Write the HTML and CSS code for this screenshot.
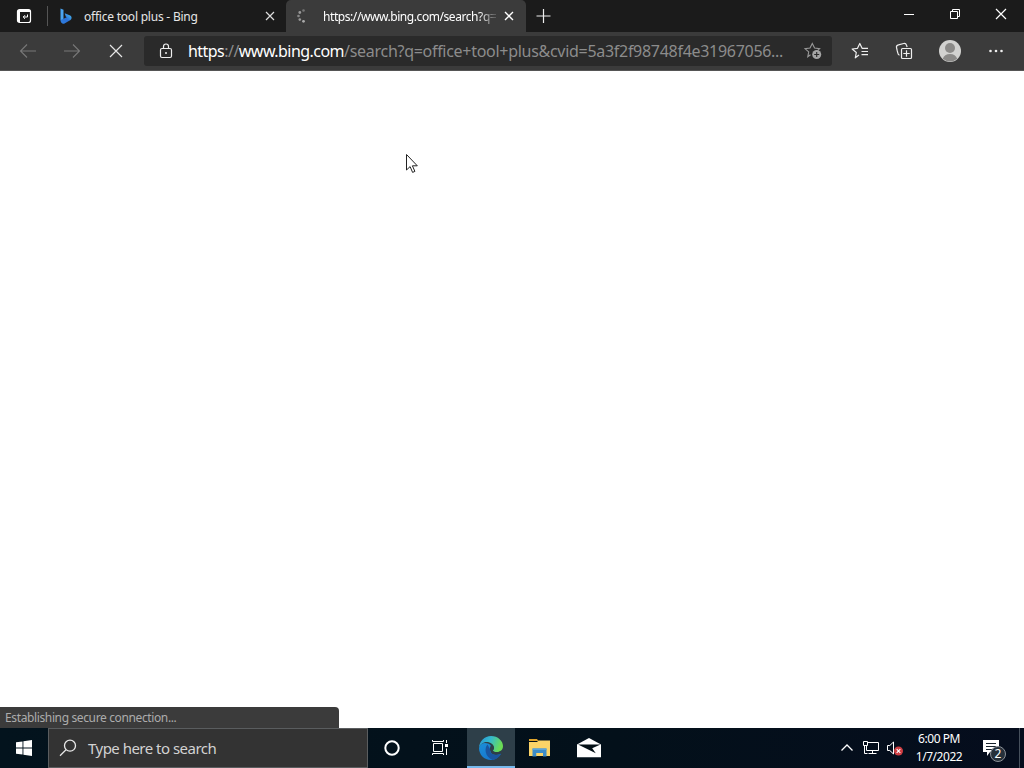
FILE: index.html
```html
<!DOCTYPE html>
<html lang="en">
<head>
    <meta charset="UTF-8">
    <title>office tool plus - Bing</title>
    <link rel="stylesheet" href="styles.css">
</head>
<body>
    <div class="desktop">
        <div class="tab-strip">
            <div class="tab-actions">
                <svg width="16" height="16" viewBox="0 0 16 16" fill="none" stroke="#fff">
                    <rect x="1.500" y="1.500" width="13" height="13" rx="2" stroke-width="1.200"/>
                    <path d="M2 2h12v2H4v10H2z" fill="#fff" stroke="none"/>
                    <path d="M11.500 6.500v2.500H7.500M9 7.200L7.200 9 9 10.800" stroke-width="1"/>
                </svg>
            </div>
            <div class="tab">
                <svg class="favicon" width="16" height="16" viewBox="0 0 16 16">
                    <defs>
                        <linearGradient id="bing" x1="0" y1="1" x2="1" y2="0">
                            <stop offset="0" stop-color="#2f7fe0"/>
                            <stop offset=".5" stop-color="#2b71d8"/>
                            <stop offset="1" stop-color="#4cc4f0"/>
                        </linearGradient>
                    </defs>
                    <path d="M2.500 .5l3 1.200v9.200l-1 2.600-2-1.500z" fill="#4ba4f0"/>
                    <path d="M2.500 12l3-1.200 3.200-1.600-1-.6L6.700 5.200l5.500 2.200c1.800 1 1.800 3.400.3 4.600l-6 3.600c-1.900.8-4-.8-4-3.600z" fill="url(#bing)"/>
                </svg>
                <span class="tab-title">office tool plus - Bing</span>
                <svg class="tab-close" width="10" height="10" viewBox="0 0 10 10" stroke="#ddd" stroke-width="1.200"><path d="M1 1l8 8M9 1L1 9"/></svg>
            </div>
            <div class="tab active">
                <svg class="favicon" width="16" height="16" viewBox="0 0 16 16" fill="#999">
                    <circle cx="7.500" cy="2.500" r="1.300" fill="#777"/>
                    <circle cx="3.800" cy="4.500" r="1.400"/>
                    <circle cx="2.500" cy="8" r="1.300" fill="#888"/>
                    <circle cx="3.800" cy="11.600" r="1.300"/>
                    <circle cx="7.500" cy="13.300" r="1.400" fill="#aaa"/>
                </svg>
                <span class="tab-title fade">https://www.bing.com/search?q=</span>
                <svg class="tab-close" width="10" height="10" viewBox="0 0 10 10" stroke="#fff" stroke-width="1.400"><path d="M1 1l8 8M9 1L1 9"/></svg>
            </div>
            <svg class="new-tab" width="16" height="16" viewBox="0 0 16 16" stroke="#eee" stroke-width="1.200"><path d="M7.500 1v14M.5 8h14"/></svg>
            <div class="window-buttons">
                <svg width="46" height="32" viewBox="0 0 46 32" stroke="#fff"><path d="M18 14.500h10"/></svg>
                <svg width="46" height="32" viewBox="0 0 46 32" fill="none" stroke="#fff"><path d="M18.500 11.500h7v7h-7zM20.500 11.500v-2h7v7h-2"/></svg>
                <svg width="46" height="32" viewBox="0 0 46 32" stroke="#fff" stroke-width="1.200"><path d="M18 9l10 10M28 9L18 19"/></svg>
            </div>
        </div>

        <div class="toolbar">
            <div class="nav-buttons">
                <svg width="18" height="18" viewBox="0 0 18 18" fill="none" stroke="#787878" stroke-width="1.100"><path d="M17 9H1.500M8 2.500L1.500 9 8 15.500"/></svg>
                <svg width="18" height="18" viewBox="0 0 18 18" fill="none" stroke="#787878" stroke-width="1.100"><path d="M1 9h15.500M10 2.500L16.500 9 10 15.500"/></svg>
                <svg width="18" height="18" viewBox="0 0 18 18" fill="none" stroke="#e6e6e6" stroke-width="1.200"><path d="M3 3l12 12M15 3L3 15"/></svg>
            </div>
            <div class="address-bar">
                <svg class="lock" width="14" height="16" viewBox="0 0 14 16" fill="none" stroke="#eee" stroke-width="1.200">
                    <rect x="1.500" y="5.500" width="11" height="9" rx="1.500"/>
                    <path d="M4.500 5.500V3.500a2.500 2.500 0 0 1 5 0v2"/>
                    <circle cx="7" cy="10" r="1" fill="#eee" stroke="none"/>
                </svg>
                <div class="url"><span class="host">https</span>://<span class="host">www.bing.com</span><span class="path">/search?q=office+tool+plus&amp;cvid=5a3f2f98748f4e31967056...</span></div>
                <svg class="star-add" width="18" height="18" viewBox="0 0 18 18" fill="none" stroke="#999" stroke-width="1.100">
                    <path d="M6.500 12.700L3.800 14.800l.9-4.900L1 6.700l5-.6L8.300 1.500l2.300 4.600 5 .6-2.100 1.900"/>
                    <circle cx="12.700" cy="12.500" r="4.500" fill="#a5a5a5" stroke="none"/>
                    <path d="M12.700 10v5M10.200 12.500h5" stroke="#2b2b2b"/>
                </svg>
            </div>
            <div class="toolbar-icons">
                <svg width="18" height="18" viewBox="0 0 18 18" fill="none" stroke="#eee" stroke-width="1.200">
                    <path d="M8 13L4.300 15.800l1-5.300L1.200 7l5.300-.7L8.800 1.500l2.300 4.800H17M10.500 9.500H17M10.500 12.700H17" stroke-linejoin="round"/>
                </svg>
                <svg width="18" height="18" viewBox="0 0 18 18" fill="none" stroke="#eee" stroke-width="1.200">
                    <path d="M4.500 13.200C2.500 12.500 3 11 2.300 9L1.500 5.500C1.200 4 2 3.200 3.400 2.900L8.700 1.500c1.400-.3 2.300.2 2.800 1.800l.6 1.700"/>
                    <rect x="6.500" y="6.500" width="10" height="10" rx="1"/>
                    <path d="M11.500 8.300v6.400M8.300 11.500h6.400"/>
                </svg>
                <svg width="22" height="22" viewBox="0 0 22 22">
                    <circle cx="11" cy="11" r="11" fill="#d2d2d0"/>
                    <circle cx="11" cy="8" r="5" fill="#8b8a88"/>
                    <path d="M3.800 18.800c1-3.300 3.500-4.800 7.200-4.800s6.200 1.500 7.200 4.800a11 11 0 0 1-14.400 0z" fill="#8b8a88"/>
                </svg>
                <svg width="18" height="18" viewBox="0 0 18 18" fill="#eee"><circle cx="3.500" cy="9" r="1.300"/><circle cx="9" cy="9" r="1.300"/><circle cx="14.500" cy="9" r="1.300"/></svg>
            </div>
        </div>

        <div class="page">
            <div class="status">Establishing secure connection...</div>
        </div>

        <div class="taskbar">
            <div class="start">
                <svg width="16" height="16" viewBox="0 0 16 16" fill="#fff"><path d="M0 2.300L6.500 1.400v6.100H0zM7.400 1.300L16 0v7.500H7.400zM0 8.400h6.500v6.200L0 13.700zM7.400 8.400H16V16l-8.600-1.200z"/></svg>
            </div>
            <div class="search">
                <svg width="18" height="18" viewBox="0 0 18 18" fill="none" stroke="#e8e8e8" stroke-width="1.300"><circle cx="11" cy="6.700" r="5.500"/><path d="M7 10.700L1 16.800"/></svg>
                <span>Type here to search</span>
            </div>
            <div class="task"><svg width="18" height="18" viewBox="0 0 18 18" fill="none" stroke="#fff" stroke-width="2"><circle cx="9" cy="9" r="6.700"/></svg></div>
            <div class="task task-view">
                <svg width="18" height="18" viewBox="0 0 18 18" fill="none" stroke="#fff">
                    <path d="M2.500 4.500h9v8h-9zM1.500 1v1.500h11V1M1.500 16v-1.500h11V16M15.500 1v3M15.500 9.500V16"/>
                    <path d="M14 5h3v3h-3z" fill="#fff" stroke="none"/>
                </svg>
            </div>
            <div class="task open">
                <svg width="24" height="24" viewBox="0 0 24 24">
                    <defs>
                        <linearGradient id="edgeTop" x1="0" y1="0" x2="1" y2=".3">
                            <stop offset="0" stop-color="#2593d8"/>
                            <stop offset=".5" stop-color="#35b9cc"/>
                            <stop offset="1" stop-color="#6adc55"/>
                        </linearGradient>
                        <linearGradient id="edgeLow" x1="0" y1="0" x2=".7" y2="1">
                            <stop offset="0" stop-color="#1b8fd8"/>
                            <stop offset="1" stop-color="#1674cc"/>
                        </linearGradient>
                    </defs>
                    <path d="M0 12C1 7.500 5 6 9 7.500c3.500 1.300 4 4 3 5.500-1.500 3 1 6 5 6 2.500 0 4-1 5-1.500-2 4-6 6.500-10 6.500C5 24 0 18.500 0 12z" fill="url(#edgeLow)"/>
                    <path d="M8.500 8.500C5 12 6 21 13.500 23.900c4.200-.5 7-3 8.700-6.400-5 3-12 .5-11.200-4.500z" fill="#1a559f"/>
                    <path d="M0 12C.3 5 5.500 0 12 0c7 0 12 5 12 10 0 4-3 6-6 6-2.500 0-4-.7-4-1.600 0-.7 1-1 1-2.900C15 8.500 11.500 6 7.700 6 4 6 1 8.500 0 12z" fill="url(#edgeTop)"/>
                    <path d="M12 9.500c1.700 0 3 1 3 2.500 0 1.300-1 1.700-1 2.400 0 .9 1.500 1.600 4 1.600 1.600 0 2.800-.4 3.900-1.300l.1 2.500c-5 2.400-10.500.5-11-4-.1-1.500.2-2.700 1-3.700z" fill="#2e3f49"/>
                </svg>
            </div>
            <div class="task">
                <svg width="22" height="20" viewBox="0 0 22 20">
                    <path d="M0 1h8l1.500 2H0z" fill="#e0a52c"/>
                    <path d="M0 4h8l1.500-1.500H21V18H0z" fill="#fbd468"/>
                    <path d="M3.500 18.500v-8h14v8H14V15H7.500v3.500z" fill="#3d8cc8"/>
                    <path d="M3.500 10.500h14v1.500h-14z" fill="#5aa5dc"/>
                    <path d="M7.500 15H14v3H7.500z" fill="#fbd468"/>
                </svg>
            </div>
            <div class="task">
                <svg width="24" height="20" viewBox="0 0 24 20">
                    <path d="M0 6.500L12 0l12 6.500v12.800H0z" fill="#fff"/>
                    <path d="M1 6.500h22.500l-8.300 3.800 3.600 5z" fill="#051117"/>
                </svg>
            </div>
            <div class="tray">
                <svg class="chevron" width="14" height="14" viewBox="0 0 14 14" fill="none" stroke="#fff" stroke-width="1.300"><path d="M1.500 9.500L7 4l5.500 5.500"/></svg>
                <svg class="network" width="18" height="16" viewBox="0 0 18 16" fill="none" stroke="#fff">
                    <path d="M5.500 2.500h11v8H4.500V6M10.500 10.500v3M6.500 13.500h8M2.500 6v7.500h3M1.500 1.500h4v4h-4z"/>
                </svg>
                <svg class="volume" width="18" height="16" viewBox="0 0 18 16" fill="none">
                    <path d="M1.500 5.500h2.300L7.500 2v12l-3.700-3.500H1.500z" stroke="#fff"/>
                    <circle cx="12.500" cy="11" r="4.500" fill="#cf3e43"/>
                    <path d="M10.700 9.200l3.600 3.600M14.300 9.200l-3.600 3.600" stroke="#fff" stroke-width="1.100"/>
                </svg>
                <div class="clock">
                    <div class="time">6:00 PM</div>
                    <div class="date">1/7/2022</div>
                </div>
                <div class="notifications">
                    <svg width="18" height="18" viewBox="0 0 18 18"><path d="M1 1h16v12H8l-3 4v-4H1z" fill="#fff"/><path d="M4 4.500h10M4 7.500h10M4 10.500h6" stroke="#18232d"/></svg>
                    <span class="count">2</span>
                </div>
            </div>
        </div>

        <svg class="cursor" width="14" height="21" viewBox="0 0 14 21"><path d="M1.500 1.500v15.500l3.600-3.400 2.500 5.800 2.300-1-2.500-5.600h4.900z" fill="#fff" stroke="#222"/></svg>
    </div>
</body>
</html>
```
FILE: styles.css
```css
body {
    margin: 0;
    font-family: "Noto Sans", "Open Sans", sans-serif;
    font-size: 12px;
    color: #fff;
}
svg {
    display: block;
    flex: none;
}
.desktop {
    position: relative;
    display: flex;
    flex-direction: column;
    width: 1024px;
    height: 768px;
    overflow: hidden;
    background-color: #fff;
}

/* tabs */
.tab-strip {
    display: flex;
    height: 32px;
    background-color: #1b1b1b;
}
.tab-actions {
    display: flex;
    align-items: center;
    width: 31px;
    height: 20px;
    margin-top: 6px;
    padding-left: 16px;
    border-right: 1px solid #555;
}
.tab {
    display: flex;
    align-items: center;
    box-sizing: border-box;
    width: 238px;
    padding: 0 11px 0 10px;
}
.tab.active {
    width: 240px;
    background-color: #3b3b3b;
    border-radius: 5px 5px 0 0;
}
.tab-title {
    flex: 1;
    margin-left: 10px;
    white-space: nowrap;
    letter-spacing: -0.22px;
    color: #e6e6e6;
}
.tab.active .tab-title {
    flex: none;
    width: 173px;
    margin: 0 auto 0 11px;
    letter-spacing: -0.43px;
    color: #fff;
}
.tab-title.fade {
    -webkit-mask-image: linear-gradient(to right, #000 90%, rgba(0, 0, 0, 0.2) 99%);
    mask-image: linear-gradient(to right, #000 90%, rgba(0, 0, 0, 0.2) 99%);
}
.tab.active .tab-close {
    margin-right: 1px;
}
.new-tab {
    margin: 8px 0 0 10px;
}
.window-buttons {
    display: flex;
    margin-left: auto;
}

/* toolbar */
.toolbar {
    display: flex;
    align-items: center;
    box-sizing: border-box;
    height: 39px;
    background-color: #3b3b3b;
    border-bottom: 1px solid #555;
}
.nav-buttons {
    display: flex;
    gap: 26px;
    width: 125px;
    padding-left: 19px;
}
.address-bar {
    display: flex;
    align-items: center;
    box-sizing: border-box;
    width: 688px;
    height: 30px;
    padding: 0 10px 0 15px;
    background-color: #2a2a2a;
    border-radius: 3px;
}
.url {
    flex: 1;
    margin-left: 15px;
    font-size: 16px;
    white-space: nowrap;
    letter-spacing: -0.54px;
    color: #8c8c8c;
}
.host {
    color: #fff;
}
.path {
    letter-spacing: -0.29px;
}
.toolbar-icons {
    display: flex;
    align-items: center;
    gap: 26px;
    padding-left: 19px;
}

/* page and status bubble */
.page {
    flex: 1;
    display: flex;
    align-items: flex-end;
}
.status {
    box-sizing: border-box;
    width: 339px;
    height: 21px;
    padding-left: 5px;
    line-height: 22px;
    letter-spacing: -0.37px;
    color: #acacac;
    background-color: #3b3b3b;
    border-radius: 0 4px 0 0;
}

/* taskbar */
.taskbar {
    display: flex;
    height: 40px;
    background: linear-gradient(to right, #03131d, #03101a 60%, #050d1d);
}
.start {
    display: flex;
    align-items: center;
    justify-content: center;
    width: 48px;
}
.search {
    display: flex;
    align-items: center;
    box-sizing: border-box;
    width: 320px;
    padding-left: 10px;
    background-color: #333;
    border: 1px solid #5a5d5f;
    font-size: 15px;
    letter-spacing: -0.52px;
    color: #d2d2d2;
}
.search span {
    margin-left: 11px;
}
.task {
    display: flex;
    align-items: center;
    justify-content: center;
    width: 48px;
    margin-right: 1px;
}
.task-view {
    margin-right: 2px;
}
.task-view svg {
    margin-right: 2px;
}
.task.open {
    box-sizing: border-box;
    border-bottom: 2px solid #76b9ed;
    background-color: #2e3f49;
    padding-top: 1px;
}
.tray {
    display: flex;
    align-items: center;
    margin-left: auto;
    padding-right: 1px;
    border-right: 1px solid #46505c;
    margin-right: 4px;
}
.network {
    margin-left: 8px;
}
.volume {
    margin-left: 6px;
}
.clock {
    width: 60px;
    margin-left: 5px;
    text-align: center;
    line-height: 18px;
    letter-spacing: -0.45px;
    white-space: nowrap;
}
.notifications {
    position: relative;
    width: 36px;
    margin-left: 13px;
}
.count {
    position: absolute;
    left: 8px;
    top: 7px;
    width: 14px;
    height: 14px;
    border: 1px solid #8c9198;
    border-radius: 50%;
    background-color: #26303a;
    font-size: 12px;
    line-height: 14px;
    text-align: center;
}

.cursor {
    position: absolute;
    left: 405px;
    top: 153px;
}
```
